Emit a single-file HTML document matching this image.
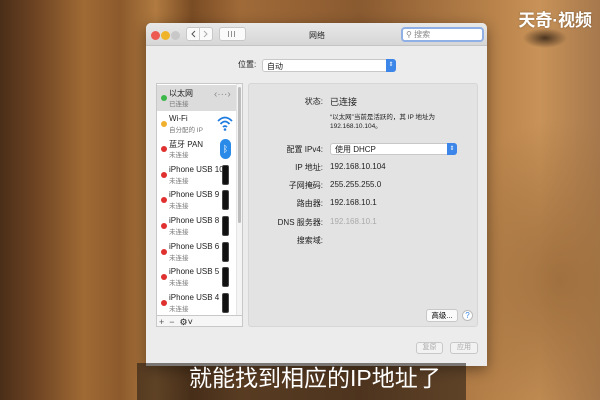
<!DOCTYPE html>
<html><head><meta charset="utf-8"><style>
*{margin:0;padding:0;box-sizing:border-box}
body{width:600px;height:400px;overflow:hidden;position:relative;font-family:"Liberation Sans","Noto Sans CJK SC",sans-serif;
background:
radial-gradient(ellipse 22px 10px at 545px 38px,#4a3420 0%,rgba(74,52,32,0) 100%),
radial-gradient(ellipse 120px 160px at 560px 280px,#a0703e 0%,rgba(160,112,62,0) 100%),
linear-gradient(90deg,#4a2e18 0%,#6e4423 6%,#a06a34 14%,#8c5a2c 20%,#b07a40 26%,#7a4c24 32%,#a06a38 40%,#8a5a30 60%,#b8824a 82%,#c89258 90%,#a6784c 100%);}
.abs{position:absolute}
.win{left:146px;top:23px;width:341px;height:343px;background:#ececec;border-radius:5px 5px 0 0;overflow:hidden;box-shadow:0 4px 14px rgba(0,0,0,.4)}
.tb{left:0;top:0;width:341px;height:23px;background:linear-gradient(#e8e8e8,#d6d6d6);border-bottom:1px solid #c4c4c4}
.dot{width:9px;height:9px;border-radius:50%;top:8px}
.btn{background:#fafafa;border:1px solid #c8c8c8;border-radius:3px}
.t{font-size:8px;color:#222;white-space:nowrap}
.row{left:0;width:80px;height:25.6px}
.row .d{position:absolute;left:4px;top:10px;width:6px;height:6px;border-radius:50%}
.row .n{position:absolute;left:12px;top:3px;font-size:8px;color:#222;white-space:nowrap}
.row .s{position:absolute;left:12px;top:13px;font-size:6.5px;color:#777;white-space:nowrap}
.row .ph{position:absolute;left:65px;top:3px;width:7px;height:20px;background:#111;border-radius:2px;border:1px solid #444}
.lab{position:absolute;right:164px;font-size:8px;color:#222;white-space:nowrap;text-align:right}
.val{position:absolute;left:184px;font-size:8px;color:#222;white-space:nowrap}
</style></head><body>
<div class="abs" style="right:8px;top:6px;color:#fff;font-size:17px;font-weight:bold;text-shadow:0 0 2px rgba(0,0,0,.3)">天奇·视频</div>
<div class="abs win">
 <div class="abs tb">
  <div class="abs dot" style="left:5px;background:#ec5a52"></div>
  <div class="abs dot" style="left:15px;background:#f0b42a"></div>
  <div class="abs dot" style="left:25px;background:#c8c8c8"></div>
  <div class="abs btn" style="left:40px;top:4px;width:27px;height:14px"></div>
  <div class="abs" style="left:53px;top:4px;width:1px;height:14px;background:#ccc"></div>
  <svg class="abs" style="left:40px;top:4px" width="27" height="14"><path d="M9 4 L6 7 L9 10" fill="none" stroke="#555" stroke-width="1"/><path d="M18 4 L21 7 L18 10" fill="none" stroke="#aaa" stroke-width="1"/></svg>
  <div class="abs btn" style="left:73px;top:4px;width:27px;height:14px"></div>
  <div class="abs" style="left:82px;top:8px;width:9px;height:6px;background:repeating-linear-gradient(90deg,#666 0 1px,transparent 1px 3px);opacity:.7"></div>
  <div class="abs t" style="left:163px;top:7px">网络</div>
  <div class="abs" style="left:255px;top:4px;width:83px;height:15px;background:#fff;border:2px solid #8fb0e6;border-radius:4px"></div>
  <div class="abs t" style="left:260px;top:6px;color:#888;font-size:8px">⚲ 搜索</div>
 </div>
 <div class="abs t" style="left:92px;top:36px">位置:</div>
 <div class="abs btn" style="left:116px;top:36px;width:134px;height:13px;background:#fff"></div>
 <div class="abs t" style="left:121px;top:38px">自动</div>
 <div class="abs" style="left:240px;top:36px;width:10px;height:13px;background:#3b86e8;border-radius:0 3px 3px 0;color:#fff;font-size:6px;text-align:center;line-height:13px">⇕</div>
 <div class="abs" style="left:10px;top:60px;width:87px;height:244px;background:#fff;border:1px solid #c8c8c8;overflow:hidden">
  <div class="abs row" style="top:1px;background:#dcdcdc"><div class="d" style="background:#3bb84a"></div><div class="n">以太网</div><div class="s">已连接</div><div class="abs" style="left:57px;top:4px;font-size:10px;color:#888">‹···›</div></div>
  <div class="abs row" style="top:26.6px"><div class="d" style="background:#f0b030"></div><div class="n">Wi-Fi</div><div class="s">自分配的 IP</div>
   <svg class="abs" style="left:60px;top:4px" width="16" height="16"><path d="M1 6 Q8 -1 15 6" fill="none" stroke="#1e7be0" stroke-width="1.8"/><path d="M3.5 9 Q8 4 12.5 9" fill="none" stroke="#1e7be0" stroke-width="1.8"/><path d="M6 12 Q8 10 10 12" fill="none" stroke="#1e7be0" stroke-width="1.8"/><circle cx="8" cy="14.5" r="1.3" fill="#1e7be0"/></svg></div>
  <div class="abs row" style="top:52.2px"><div class="d" style="background:#e03030"></div><div class="n">蓝牙 PAN</div><div class="s">未连接</div><div class="abs" style="left:63px;top:3px;width:11px;height:20px;border-radius:6px;background:#2a8ae8;color:#fff;font-size:9px;text-align:center;line-height:20px">ᛒ</div></div>
  <div class="abs row" style="top:77.8px"><div class="d" style="background:#e03030"></div><div class="n">iPhone USB 10</div><div class="s">未连接</div><div class="ph"></div></div>
  <div class="abs row" style="top:103.4px"><div class="d" style="background:#e03030"></div><div class="n">iPhone USB 9</div><div class="s">未连接</div><div class="ph"></div></div>
  <div class="abs row" style="top:129px"><div class="d" style="background:#e03030"></div><div class="n">iPhone USB 8</div><div class="s">未连接</div><div class="ph"></div></div>
  <div class="abs row" style="top:154.6px"><div class="d" style="background:#e03030"></div><div class="n">iPhone USB 6</div><div class="s">未连接</div><div class="ph"></div></div>
  <div class="abs row" style="top:180.2px"><div class="d" style="background:#e03030"></div><div class="n">iPhone USB 5</div><div class="s">未连接</div><div class="ph"></div></div>
  <div class="abs row" style="top:205.8px"><div class="d" style="background:#e03030"></div><div class="n">iPhone USB 4</div><div class="s">未连接</div><div class="ph"></div></div>
  <div class="abs" style="left:79px;top:0;width:7px;height:232px;background:#f4f4f4;border-left:1px solid #e4e4e4"></div>
  <div class="abs" style="left:81px;top:3px;width:3px;height:136px;background:#bdbdbd;border-radius:2px"></div>
  <div class="abs" style="left:0;top:231px;width:87px;height:13px;background:#f6f6f6;border-top:1px solid #c8c8c8;font-size:9px;color:#555;line-height:12px;padding-left:2px">+ &nbsp;− &nbsp;<span style="color:#222">⚙˅</span></div>
 </div>
 <div class="abs" style="left:102px;top:60px;width:230px;height:244px;background:#e3e3e3;border:1px solid #d6d6d6;border-radius:3px"></div>
 <div class="lab" style="top:73px">状态:</div><div class="val" style="top:72px;font-size:9px">已连接</div>
 <div class="val" style="top:88px;font-size:6.5px">“以太网”当前是活跃的，其 IP 地址为</div>
 <div class="val" style="top:97px;font-size:6.5px">192.168.10.104。</div>
 <div class="lab" style="top:121px">配置 IPv4:</div>
 <div class="abs btn" style="left:184px;top:120px;width:127px;height:12px;background:#fff"></div>
 <div class="val" style="left:189px;top:121px">使用 DHCP</div>
 <div class="abs" style="left:301px;top:120px;width:10px;height:12px;background:#3b86e8;border-radius:0 3px 3px 0;color:#fff;font-size:6px;text-align:center;line-height:12px">⇕</div>
 <div class="lab" style="top:139px">IP 地址:</div><div class="val" style="top:139px">192.168.10.104</div>
 <div class="lab" style="top:157px">子网掩码:</div><div class="val" style="top:157px">255.255.255.0</div>
 <div class="lab" style="top:175px">路由器:</div><div class="val" style="top:175px">192.168.10.1</div>
 <div class="lab" style="top:194px">DNS 服务器:</div><div class="val" style="top:194px;color:#aaa">192.168.10.1</div>
 <div class="lab" style="top:212px">搜索域:</div>
 <div class="abs btn" style="left:280px;top:286px;width:32px;height:13px;font-size:7.5px;text-align:center;line-height:11px">高级...</div>
 <div class="abs" style="left:316px;top:287px;width:11px;height:11px;border-radius:50%;background:#fff;border:1px solid #bbb;color:#3b86e8;font-size:8px;text-align:center;line-height:10px">?</div>
 <div class="abs btn" style="left:270px;top:319px;width:27px;height:12px;font-size:7px;color:#aaa;text-align:center;line-height:10px;background:#f2f2f2">复原</div>
 <div class="abs btn" style="left:304px;top:319px;width:28px;height:12px;font-size:7px;color:#aaa;text-align:center;line-height:10px;background:#f2f2f2">应用</div>
</div>
<div class="abs" style="left:137px;top:363px;width:329px;height:37px;background:rgba(30,22,16,.55)"></div>
<div class="abs" style="left:189px;top:363px;color:#fff;font-size:23px;line-height:30px;white-space:nowrap">就能找到相应的IP地址了</div>
</body></html>
